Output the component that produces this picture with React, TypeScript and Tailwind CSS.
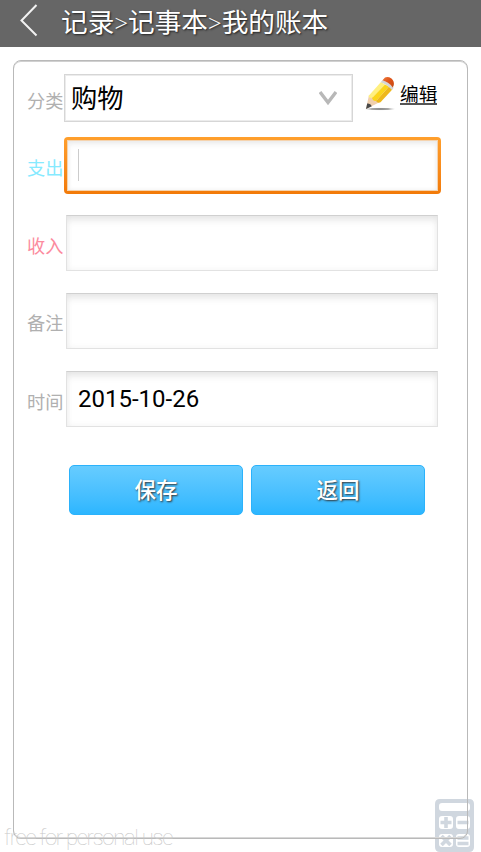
import type { ReactNode } from 'react';

const cjk = "font-['Roboto','Noto_Sans_CJK_SC',sans-serif]";

function Label({ children, className }: { children: ReactNode; className: string }) {
  return (
    <label className={`w-[37px] shrink-0 whitespace-nowrap text-[18.2px] leading-6 ${className}`}>
      {children}
    </label>
  );
}

function Field({ value }: { value?: string }) {
  return (
    <div className="flex h-[56px] w-[372px] items-center border border-[#e2e2e2] border-t-[#d0d0d0] bg-white pl-[11px] text-[24px] text-black shadow-[inset_0_6px_9px_-3px_#e2e2e2,inset_0_0_6px_#f2f2f2]">
      {value}
    </div>
  );
}

function Pencil() {
  return (
    <svg width="34" height="36" viewBox="0 0 34 36" className="-mt-[9px] shrink-0">
      <defs>
        <linearGradient id="eraser" x1="0" y1="0" x2="1" y2="1">
          <stop offset="0" stopColor="#ef7a3c" />
          <stop offset="0.5" stopColor="#dc5118" />
          <stop offset="1" stopColor="#c54a14" />
        </linearGradient>
        <radialGradient id="shade">
          <stop offset="0" stopColor="#777" />
          <stop offset="0.6" stopColor="#aaa" />
          <stop offset="1" stopColor="#ddd" stopOpacity="0" />
        </radialGradient>
      </defs>
      <ellipse cx="17" cy="33" rx="16" ry="1.6" fill="url(#shade)" />
      <path d="M6 19 3 33 17 26Z" fill="#f0cfae" />
      <path d="M4.2 27.5 3 33 8.8 30.2Q7.5 27 4.2 27.5Z" fill="#484848" />
      <path d="M18 6 5.5 20Q6 22.5 9 22L22 8.5Z" fill="#fff080" />
      <path d="M22 8.5 9 22Q10 25.5 13 25L26 10.5Z" fill="#fbd51c" />
      <path d="M26 10.5 13 25Q14.5 27.5 17.5 26.3L29.3 13.5Z" fill="#eeb81d" />
      <path d="M17.7 6.2 19.6 4Q26 6 30.7 11.8L29 14Q24 8.5 17.7 6.2Z" fill="#d5d5d5" />
      <path d="M19.5 4.2 22 1.4Q25 .1 28.5 2.4Q31.5 5 30.8 9L29.8 11.4Q26 6 19.5 4.2Z" fill="url(#eraser)" />
    </svg>
  );
}

function Calculator() {
  return (
    <svg width="39" height="53" viewBox="0 0 39 53">
      <path
        fill="#d0d7df"
        fillRule="evenodd"
        d="M5 0h29q5 0 5 5v43q0 5-5 5H5q-5 0-5-5V5q0-5 5-5ZM7 4q-3 0-3 3v2q0 3 3 3h25q3 0 3-3V7q0-3-3-3ZM7 17q-3 0-3 3v7q0 3 3 3h8q3 0 3-3v-7q0-3-3-3ZM24 17q-3 0-3 3v7q0 3 3 3h8q3 0 3-3v-7q0-3-3-3ZM7 35q-3 0-3 3v7q0 3 3 3h8q3 0 3-3v-7q0-3-3-3ZM24 35q-3 0-3 3v7q0 3 3 3h8q3 0 3-3v-7q0-3-3-3Z"
      />
      <g stroke="#d0d7df" strokeWidth="3.6">
        <path d="M5.500 23.500h11M11 18v11M22.500 23.500h11M6.500 37l9 9M15.500 37l-9 9M22.500 39h11M22.500 44.500h11" />
      </g>
    </svg>
  );
}

function ActionButton({ children }: { children: ReactNode }) {
  return (
    <button className="h-[50px] w-[174px] rounded-[5px] border border-[#2bb2fb] bg-linear-to-b from-[#66ccff] to-[#2bb6ff] pt-[1px] text-[21.5px] leading-none font-medium text-white [text-shadow:1px_1px_2px_#333]">
      {children}
    </button>
  );
}

export default function App() {
  return (
    <div className={`relative flex h-[852px] w-[481px] flex-col overflow-hidden bg-white ${cjk}`}>
      <header className="flex h-[47px] shrink-0 items-center bg-[#666] pl-[20px] text-white [text-shadow:1px_1px_2px_#222]">
        <svg width="18" height="34" viewBox="0 0 18 34" className="-mt-[7px] shrink-0" fill="none" stroke="#f2f2f2" strokeWidth="2">
          <path d="M16.5 2 1.5 17.5l15 15" />
        </svg>
        <h1 className="-mt-[1px] ml-[23px] flex items-center text-[26.67px] leading-[40px] font-normal whitespace-nowrap">
          <span>记录</span>
          <span className="w-[13.7px] text-center font-['Liberation_Serif',serif] text-[24px]">&gt;</span>
          <span>记事本</span>
          <span className="w-[13.7px] text-center font-['Liberation_Serif',serif] text-[24px]">&gt;</span>
          <span>我的账本</span>
        </h1>
      </header>

      <main className="z-10 mt-[13px] ml-[13px] flex h-[779px] w-[455px] shrink-0 flex-col rounded-[8px] border border-[#b9b9b9] pt-[13px] pl-[13px] shadow-[inset_0_1px_0_#d0d0d0,inset_0_-1px_0_#d8d8d8]">
        <div className="flex h-[48px] items-center">
          <Label className="pt-[7px] text-[#b0b0b0]">分类</Label>
          <div className="flex h-[48px] w-[289px] items-center justify-between border border-[#d6d6d6] pr-[15px] pl-[6px] shadow-[inset_0_0_0_1px_#ececec]">
            <span className="pt-[2px] text-[26.3px] leading-none text-black">购物</span>
            <svg width="18" height="16" viewBox="0 0 18 16" fill="none" stroke="#b8b8b8" strokeWidth="3.4">
              <path d="M1 2 9 12.500l8-10.500" />
            </svg>
          </div>
          <div className="ml-[10px] flex items-center">
            <Pencil />
            <span className="-mt-[7px] ml-[3px] h-[20px] border-b-2 border-[#555] text-[18.67px] leading-[20px] text-black">编辑</span>
          </div>
        </div>

        <div className="mt-[15px] flex h-[57px] items-center">
          <Label className="pt-[7px] text-[#86eaff]">支出</Label>
          <div className="h-[57px] w-[377px] rounded-[4px] bg-linear-to-b from-[#ff9f2c] to-[#f27a08] p-[3px]">
            <div className="flex h-full items-center border border-[#f5d3ae] bg-white pl-[10px] shadow-[inset_0_4px_7px_-2px_#e8e8e8,inset_0_0_4px_#f0f0f0]">
              <span className="-mt-[1px] h-[32px] w-px bg-[#ccc]" />
            </div>
          </div>
        </div>

        <div className="mt-[21px] flex h-[56px] items-center">
          <Label className="mr-[2px] pt-[7px] text-[#fc8b9e]">收入</Label>
          <Field />
        </div>

        <div className="mt-[22px] flex h-[56px] items-center">
          <Label className="mr-[2px] pt-[6px] text-[#b0b0b0]">备注</Label>
          <Field />
        </div>

        <div className="mt-[22px] flex h-[56px] items-center">
          <Label className="mr-[2px] pt-[8px] text-[#b0b0b0]">时间</Label>
          <Field value="2015-10-26" />
        </div>

        <div className="mt-[38px] ml-[42px] flex gap-[8px]">
          <ActionButton>保存</ActionButton>
          <ActionButton>返回</ActionButton>
        </div>
      </main>

      <div className="absolute bottom-0 left-[435px]">
        <Calculator />
      </div>
      <div className="absolute top-[825px] left-[4px] z-20 font-['Roboto',sans-serif] text-[22px] leading-[26px] font-thin tracking-[-1.25px] whitespace-nowrap text-[#c8c8c8]">
        free for personal use
      </div>
    </div>
  );
}
